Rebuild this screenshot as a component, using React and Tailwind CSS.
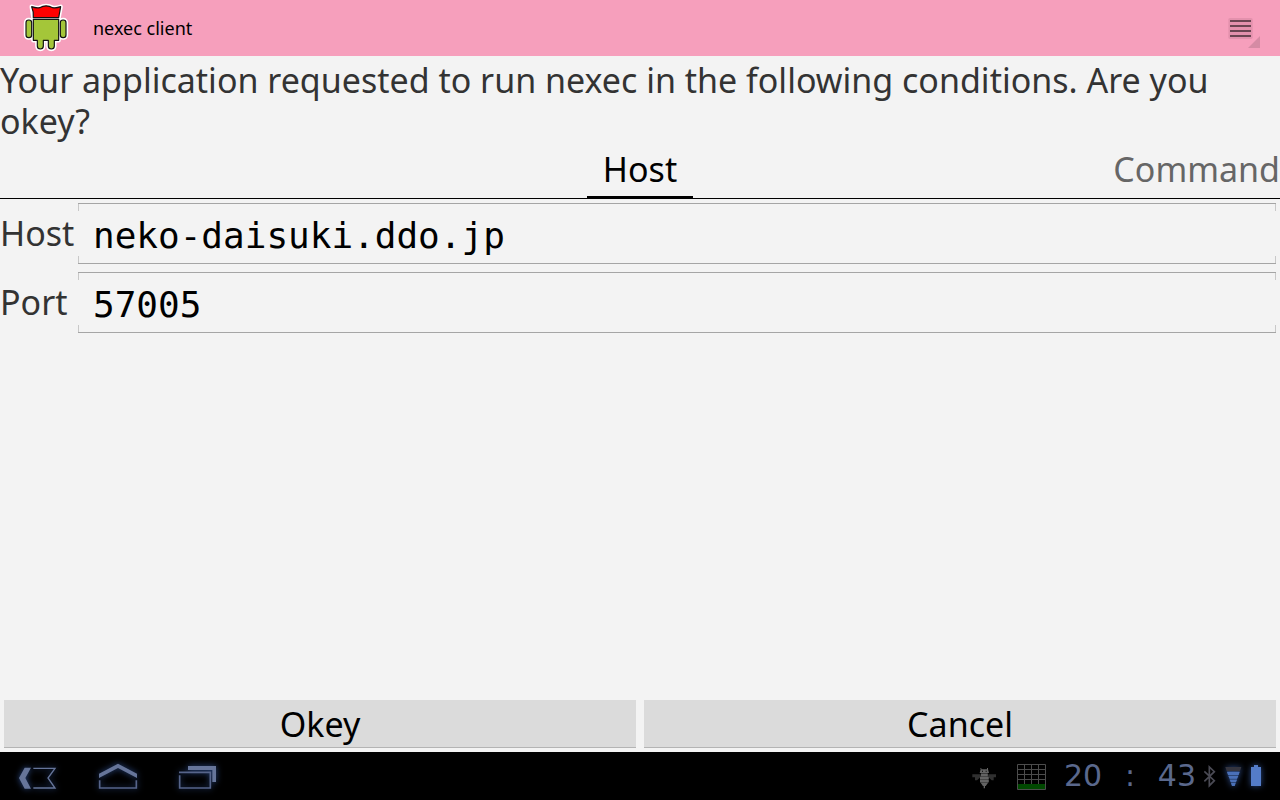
import React from "react";

function AppLogo() {
  return (
    <svg viewBox="60 0 150 168" className="h-14 w-[50px]" aria-hidden="true">
      <g strokeLinejoin="round">
        <g fill="#fff" stroke="#fff" strokeWidth="13">
          <path d="M95 20Q108 25 119 23Q138 12 158 23Q169 25 182 20L176 53V121H163V138Q163 147 154 147Q145 147 145 138V121H130V138Q130 147 121 147Q112 147 112 138V121H100V53Z" />
          <rect x="78" y="60" width="17" height="53" rx="8" />
          <rect x="181" y="60" width="17" height="53" rx="8" />
        </g>
        <g fill="#a4c639" stroke="#111" strokeWidth="3.5">
          <rect x="78" y="60" width="17" height="53" rx="8" />
          <rect x="181" y="60" width="17" height="53" rx="8" />
          <path d="M100 58H176V121H163V138Q163 147 154 147Q145 147 145 138V121H130V138Q130 147 121 147Q112 147 112 138V121H100Z" />
          <path fill="#f00" d="M95 20Q108 25 119 23Q138 12 158 23Q169 25 182 20L176 53H100Q102 36 95 20Z" />
        </g>
      </g>
    </svg>
  );
}

function MenuIcon() {
  return (
    <svg viewBox="75 0 120 168" className="h-14 w-10" aria-hidden="true">
      <rect x="85" y="54" width="73" height="63" rx="5" fill="#d98ba5" opacity="0.65" />
      <path d="M90 63H153M90 78H153M90 93H153M90 108H153" stroke="#6b4552" strokeWidth="6" />
      <path d="M180 108V144H144Z" fill="#d58ba4" />
    </svg>
  );
}

const glow = "[filter:drop-shadow(0_0_3px_#2c4a86)]";

function BackIcon() {
  return (
    <svg viewBox="0 0 240 144" className={`h-12 w-20 ${glow}`} aria-hidden="true">
      <path d="M74 47H93L76 78L93 110H74L57 78Z" fill="#66759a" />
      <path d="M100 49H165L144 78L165 108H100" fill="none" stroke="#66759a" strokeWidth="4" />
    </svg>
  );
}

function HomeIcon() {
  return (
    <svg viewBox="240 0 240 144" className={`h-12 w-20 ${glow}`} aria-hidden="true">
      <path d="M297 65L354 35L411 65V78L354 48L297 78Z" fill="#66759a" />
      <path d="M299 85V108H409V85" fill="none" stroke="#56648a" strokeWidth="5" />
    </svg>
  );
}

function RecentIcon() {
  return (
    <svg viewBox="480 0 240 144" className={`h-12 w-20 ${glow}`} aria-hidden="true">
      <path d="M564 42H648V90H637V54H564Z" fill="#66759a" />
      <path d="M537 61H631V108H539V70" fill="none" stroke="#56648a" strokeWidth="5" />
    </svg>
  );
}

function BeeIcon() {
  return (
    <svg viewBox="30 0 84 144" className="h-12 w-7" aria-hidden="true">
      <path d="M34 67H58V76L48 85H42V76H34ZM105 67H82V76L92 85H98V76H105Z" fill="#303030" />
      <path d="M60 64H80L83 75V90L74 102H66L57 90V75Z" fill="#3c3c3c" />
      <g fill="#646464">
        <path d="M58 48H61V52H78V48H81V52L84 63H56L59 52Z" />
        <path d="M60 65H80V73H60ZM57 75H83V82H57ZM57 84H83V91H57ZM60 93H80L74 102H72V109H68V102H66Z" />
      </g>
      <path d="M63 56H66V59H63ZM74 56H77V59H74Z" fill="#000" />
    </svg>
  );
}

function GridIcon() {
  return (
    <svg viewBox="162 0 99 144" className="h-12 w-[33px]" aria-hidden="true">
      <rect x="170" y="96" width="84" height="16" fill="#004800" />
      <path d="M169.500 37.500H253.500V112.500H169.500ZM190.500 37V96M211.500 37V96M232.500 37V96M169 52.500H253M169 67.500H253M169 82.500H253" fill="none" stroke="#4c4c4c" strokeWidth="3" />
    </svg>
  );
}

function BluetoothIcon() {
  return (
    <svg viewBox="312 0 48 144" className="h-12 w-4" aria-hidden="true">
      <path d="M313 58L343 86L328 101V45L343 59L313 88" fill="none" stroke="#4a4a54" strokeWidth="5" />
    </svg>
  );
}

function WifiIcon() {
  return (
    <svg viewBox="366 0 66 144" className={`h-12 w-[22px] ${glow}`} aria-hidden="true">
      <path d="M376 45H424L420 57H380Z" fill="#35353f" />
      <path d="M381 58H419L404 102H396Z" fill="#2c4677" />
      <path d="M381 60H419L416 69H384ZM385 72H415L411 80H389ZM389 83H411L408 90H392ZM393 93H407L404 102H396Z" fill="#4a70b8" />
    </svg>
  );
}

function BatteryIcon() {
  return (
    <svg viewBox="438 0 60 144" className={`h-12 w-5 ${glow}`} aria-hidden="true">
      <path d="M462 39H474V45H483V102H453V45H462Z" fill="#547cc8" />
    </svg>
  );
}

function Ticks() {
  return (
    <span className="flex w-px flex-col justify-between" aria-hidden="true">
      <span className="h-[7px] bg-[#c8c8c8]" />
      <span className="h-[7px] bg-[#c8c8c8]" />
    </span>
  );
}

function Field({ id, label, value }) {
  return (
    <div className="flex items-center">
      <label htmlFor={id} className="w-[78px] shrink-0 text-[#333]">
        {label}
      </label>
      <div className="mr-1 flex min-w-0 flex-1 border-y border-[#a5a5a5]">
        <Ticks />
        <input
          id={id}
          type="text"
          defaultValue={value}
          className="h-[59px] min-w-0 flex-1 bg-transparent px-3.5 pt-1 font-['DejaVu_Sans_Mono',monospace] text-[36px] text-black outline-none"
        />
        <Ticks />
      </div>
    </div>
  );
}

const actionClass =
  "h-12 flex-1 border-b border-[#b4b4b4] bg-[#dbdbdb] pt-0.5 text-center text-black";

export default function App() {
  return (
    <div className="flex min-h-screen flex-col bg-[#f3f3f3] font-['Noto_Sans',sans-serif] text-[34px] leading-[41px]">
      <header className="flex h-14 items-center justify-between bg-[#f69fbc] pr-[15px] pl-5">
        <div className="flex items-center gap-[23px]">
          <AppLogo />
          <h1 className="text-[18px] leading-6 text-black">nexec client</h1>
        </div>
        <button type="button" aria-label="Menu">
          <MenuIcon />
        </button>
      </header>

      <main className="flex flex-1 flex-col">
        <p className="pt-1 pb-1 text-[#333]">
          Your application requested to run nexec in the following conditions. Are you okey?
        </p>

        <div role="tablist" className="grid h-[53px] grid-cols-3 border-b border-black">
          <button
            type="button"
            role="tab"
            aria-selected="true"
            className="col-start-2 justify-self-center border-b-2 border-black px-4 pb-1 text-black"
          >
            Host
          </button>
          <button type="button" role="tab" aria-selected="false" className="justify-self-end border-b-2 border-transparent pb-1 text-[#666]">
            Command
          </button>
        </div>

        <form className="flex flex-1 flex-col" onSubmit={(e) => e.preventDefault()}>
          <div className="flex flex-col gap-2 pt-1">
            <Field id="host" label="Host" value="neko-daisuki.ddo.jp" />
            <Field id="port" label="Port" value="57005" />
          </div>
          <div className="mt-auto flex gap-2 p-1">
            <button type="submit" className={actionClass}>
              Okey
            </button>
            <button type="button" className={actionClass}>
              Cancel
            </button>
          </div>
        </form>
      </main>

      <footer className="flex h-12 items-center justify-between bg-black pr-3.5">
        <nav className="flex">
          <button type="button" aria-label="Back">
            <BackIcon />
          </button>
          <button type="button" aria-label="Home">
            <HomeIcon />
          </button>
          <button type="button" aria-label="Recent apps">
            <RecentIcon />
          </button>
        </nav>
        <div className="flex items-center">
          <BeeIcon />
          <div className="ml-4">
            <GridIcon />
          </div>
          <time
            dateTime="20:43"
            className="mr-2 ml-4 flex w-[132px] items-center justify-between font-['DejaVu_Sans',sans-serif] text-[30px] leading-8 text-[#5a688c]"
          >
            <span>20</span>
            <span>:</span>
            <span>43</span>
          </time>
          <div className="flex gap-0.5">
            <BluetoothIcon />
            <WifiIcon />
            <BatteryIcon />
          </div>
        </div>
      </footer>
    </div>
  );
}
